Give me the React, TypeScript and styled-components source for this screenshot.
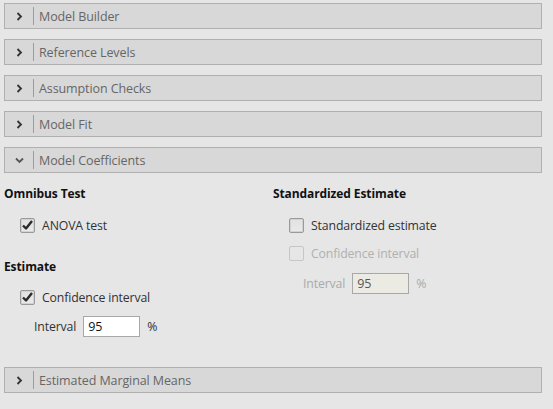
import React from "react";
import styled, { createGlobalStyle } from "styled-components";

const Global = createGlobalStyle`
  html, body { margin: 0; padding: 0; background: #e6e6e6; }
  body { font-family: "Open Sans", "Noto Sans", sans-serif; font-size: 12px; }
`;

const Page = styled.div`
  width: 553px;
  height: 409px;
  box-sizing: border-box;
  padding: 3px 11px 0 4px;
  background: #e6e6e6;
  overflow: hidden;
`;

const Section = styled.div<{ $last?: boolean }>`
  margin-bottom: ${(p) => (p.$last ? 0 : 10)}px;
`;

const Bar = styled.div`
  height: 26px;
  box-sizing: border-box;
  border: 1px solid #b0b0b0;
  background: #d8d8d8;
  display: flex;
  align-items: center;
`;

const ChevronBox = styled.div`
  width: 28px;
  height: 18px;
  display: flex;
  align-items: center;
  justify-content: center;
  border-right: 1px solid #9c9c9c;
`;

const BarTitle = styled.span`
  padding-left: 5px;
  color: #666;
  font-size: 12.5px;
  letter-spacing: -0.1px;
`;

const Content = styled.div`
  display: grid;
  grid-template-columns: 269px 269px;
  padding-top: 11px;
  padding-bottom: 30px;
`;

const Column = styled.div`
  display: flex;
  flex-direction: column;
`;

const Heading = styled.div<{ $gap?: number }>`
  height: 20px;
  line-height: 20px;
  font-weight: bold;
  color: #111;
  font-size: 12px;
  letter-spacing: -0.1px;
  margin-top: ${(p) => p.$gap ?? 0}px;
`;

const OptionRow = styled.label<{ $gap?: number; $disabled?: boolean }>`
  display: flex;
  align-items: center;
  height: 24px;
  padding-left: 16px;
  margin-top: ${(p) => p.$gap ?? 0}px;
  color: ${(p) => (p.$disabled ? "#b0b0b0" : "#333")};
  font-size: 12.3px;
  letter-spacing: -0.15px;
`;

const Box = styled.span<{ $disabled?: boolean }>`
  width: 15px;
  height: 15px;
  box-sizing: border-box;
  border: 1px solid ${(p) => (p.$disabled ? "#c6c6c6" : "#9a9a9a")};
  border-radius: 2px;
  background: ${(p) => (p.$disabled ? "#e6e6e6" : "linear-gradient(#e2e2e2, #e9e9e9)")};
  box-shadow: ${(p) => (p.$disabled ? "none" : "inset 0 0 0 1px #d2d2d2")};
  display: flex;
  align-items: center;
  justify-content: center;
  margin-right: 7px;
`;

const IntervalRow = styled.div<{ $gap?: number; $disabled?: boolean }>`
  display: flex;
  align-items: center;
  height: 22px;
  padding-left: 30px;
  margin-top: ${(p) => p.$gap ?? 0}px;
  color: ${(p) => (p.$disabled ? "#aaa" : "#333")};
  font-size: 12.3px;
  letter-spacing: -0.15px;
`;

const NumInput = styled.div<{ $disabled?: boolean }>`
  width: 57px;
  height: 21px;
  box-sizing: border-box;
  margin-left: 7px;
  margin-right: 7px;
  border: 1px solid #a8a8a8;
  background: ${(p) => (p.$disabled ? "#ebebe4" : "#ffffff")};
  color: ${(p) => (p.$disabled ? "#555" : "#111")};
  padding-left: 4px;
  line-height: 19px;
  font-size: 12.5px;
`;

const Chevron = ({ open }: { open?: boolean }) =>
  open ? (
    <svg width="9" height="7" viewBox="0 0 9 7">
      <path d="M1 1.5 L4.5 5 L8 1.5" fill="none" stroke="#555" strokeWidth="1.8" />
    </svg>
  ) : (
    <svg width="7" height="9" viewBox="0 0 7 9">
      <path d="M1.5 1 L5 4.5 L1.5 8" fill="none" stroke="#333" strokeWidth="1.8" />
    </svg>
  );

const Check = () => (
  <svg width="11" height="10" viewBox="0 0 11 10">
    <path d="M1 5.5 L4 8.5 L10 1" fill="none" stroke="#2a2a2a" strokeWidth="2.4" strokeLinejoin="round" />
  </svg>
);

const Header = ({ title, open }: { title: string; open?: boolean }) => (
  <Bar>
    <ChevronBox>
      <Chevron open={open} />
    </ChevronBox>
    <BarTitle>{title}</BarTitle>
  </Bar>
);

const Option = ({
  label,
  checked,
  disabled,
  gap,
}: {
  label: string;
  checked?: boolean;
  disabled?: boolean;
  gap?: number;
}) => (
  <OptionRow $gap={gap} $disabled={disabled}>
    <Box $disabled={disabled}>{checked && <Check />}</Box>
    {label}
  </OptionRow>
);

export default function App() {
  return (
    <>
      <Global />
      <Page>
        <Section><Header title="Model Builder" /></Section>
        <Section><Header title="Reference Levels" /></Section>
        <Section><Header title="Assumption Checks" /></Section>
        <Section><Header title="Model Fit" /></Section>
        <Section $last>
          <Header title="Model Coefficients" open />
          <Content>
            <Column>
              <Heading>Omnibus Test</Heading>
              <Option label="ANOVA test" checked gap={9} />
              <Heading $gap={20}>Estimate</Heading>
              <Option label="Confidence interval" checked gap={8} />
              <IntervalRow $gap={6}>
                Interval
                <NumInput>95</NumInput>
                %
              </IntervalRow>
            </Column>
            <Column>
              <Heading>Standardized Estimate</Heading>
              <Option label="Standardized estimate" gap={9} />
              <Option label="Confidence interval" disabled gap={4} />
              <IntervalRow $gap={7} $disabled>
                Interval
                <NumInput $disabled>95</NumInput>
                %
              </IntervalRow>
            </Column>
          </Content>
        </Section>
        <Section><Header title="Estimated Marginal Means" /></Section>
      </Page>
    </>
  );
}
